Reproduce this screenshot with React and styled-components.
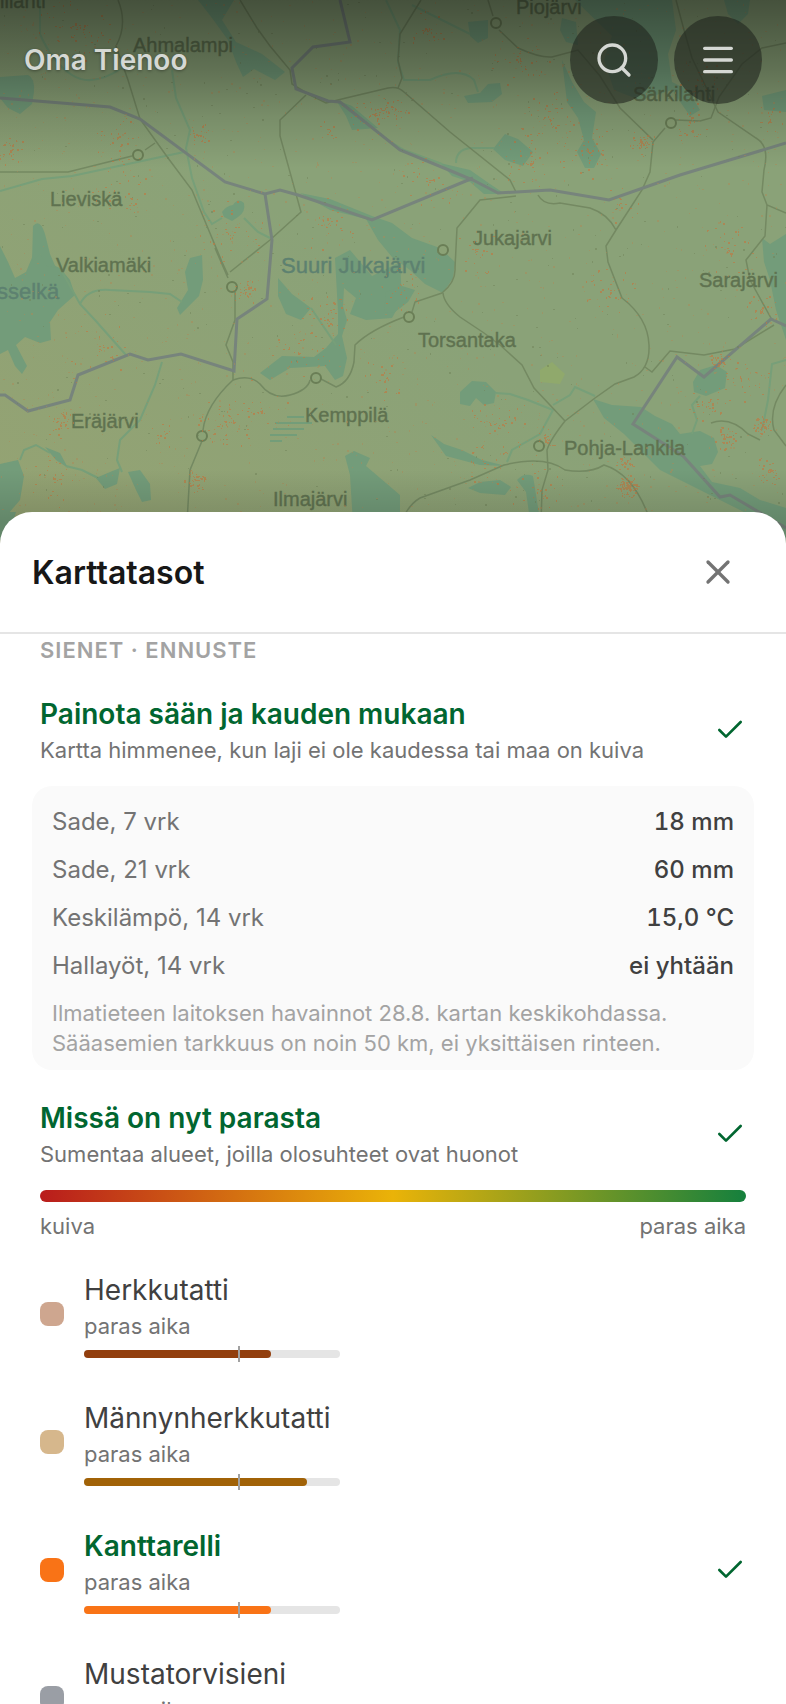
import React, { useState } from "react";
import styled, { createGlobalStyle } from "styled-components";
import { Check, Menu, Search, X } from "lucide-react";

const GlobalStyle = createGlobalStyle`
  *, *::before, *::after {
    box-sizing: border-box;
  }
  body {
    margin: 0;
    font-family: Inter, "Liberation Sans", sans-serif;
    background: #8ba276;
  }
  h1, h2, h3, p, dl, dd {
    margin: 0;
  }
  button {
    font: inherit;
    color: inherit;
    border: 0;
    padding: 0;
    background: none;
    cursor: pointer;
  }
`;

const lakes = [
  "M198 0H234L222 20 236 42 262 54 285 72 275 80 254 69 243 77 236 62 228 40 212 18Z",
  "M0 77L28 75Q35 78 34 92L32 104 20 114 8 108 0 98Z",
  "M222 212Q226 206 233 205 238 197 244 203 246 212 238 217L232 221 224 217Z",
  "M300 193L330 199 372 216 392 223 412 238 440 248 455 262 453 278 443 293 425 284 410 270 392 257 378 240 366 219 330 210Z",
  "M0 246L8 262 15 278 26 272 36 248 46 262 60 268 70 280 75 295 58 310 50 322 51 340 40 343 25 337 16 345 27 366 22 374 15 366 8 350 0 354Z",
  "M33 226Q40 218 45 234L50 254 56 268 47 266 40 254 32 262Z",
  "M190 258L202 255 203 280 199 296 180 315 177 308 188 290 185 272Z",
  "M278 278L292 294 311 308 301 320 286 314 278 296Z",
  "M335 258L350 250 372 276 400 262 402 300 392 318 366 320 350 314 356 298 344 288 343 306 347 320 342 336 347 358 343 376 335 380 325 366 308 367 290 368 270 380 260 373 282 356 314 357 326 348 338 334 338 312Z",
  "M386 292L402 286 415 290 408 302 395 312 384 313Z",
  "M460 392L472 381 486 382 496 392 494 403 484 405 476 398 470 406 460 404Z",
  "M431 435L444 444 462 450 482 460 506 466 480 465 446 456Z",
  "M593 399L612 405 641 407 655 416 672 424 680 434 700 431 714 438 718 452 712 464 700 466 712 482 740 488 760 500 786 508V540L760 520 730 505 700 490 660 470 642 452 624 434 604 418Z",
  "M693 382L700 370 716 365 727 372 725 388 706 396 694 392Z",
  "M468 488L480 482 500 480 511 487 505 495 480 493Z",
  "M517 480Q524 472 533 476L540 520H530L526 492Z",
  "M345 456L354 451 370 458 366 466 400 495V540H354L350 475Z",
  "M128 472L140 470 150 484 151 500 142 502 136 490Z",
  "M0 464L18 460 24 476 20 500 8 514 0 512Z",
  "M96 478L110 472 120 468 117 484 105 489Z",
  "M45 447L60 453 68 468 56 460Z",
  "M493 149L505 134 518 139 533 152 523 166 505 160Z",
  "M464 96L480 93 488 84 500 83 502 94 492 102 468 103Z",
  "M562 18L576 22 578 45 566 42 560 30Z",
  "M562 60L572 82 584 102 596 112 592 138 601 154 594 168 585 168 577 152 584 140 578 118 567 102Z",
  "M575 0H672L676 30 668 54 672 82 688 90 700 110 690 116 672 90 640 100 614 90 604 60 612 36Z",
  "M468 22L488 20 488 38 478 43 470 36Z",
  "M724 0H750L748 14 738 24 728 14Z",
  "M762 96L786 90V112L764 110Z",
  "M762 238L770 244 786 234V340L776 310 770 280 764 262Z",
  "M440 163L470 170 490 184 505 194 484 194 470 182 452 176Z",
  "M336 100L352 106 378 128 352 130 346 116Z",
  "M0 512H16L8 540H0Z",
];

const rivers = [
  "M40 0L40 34Q52 62 72 75T122 68",
  "M172 70L176 98 190 130 186 148 192 178 204 212 212 224 222 218",
  "M0 191L42 179 72 176 184 152",
  "M244 218L258 232 270 238",
  "M60 268L80 304 95 320 126 355",
  "M80 304Q88 288 110 290L150 292 170 294 182 302",
  "M162 362L155 385 140 420 120 440 117 460 122 472",
  "M20 460L24 450 36 445 50 453M66 466L82 470 98 478",
  "M496 393L510 394 528 400 553 410 540 434 512 450 507 462",
  "M553 405L570 395 575 387 595 396",
  "M700 396L692 405 697 420 692 434",
  "M386 0L400 30 398 62 404 80 430 80Q460 66 474 80L478 92",
  "M412 5L450 24 470 34",
  "M456 163Q456 150 470 148L494 148",
  "M311 308L336 345",
  "M786 360L772 364 768 400 762 430",
  "M386 139L404 150 442 164",
];

const roads = [
  "M118 0Q128 24 116 46L128 80 140 119 168 158 192 190 222 262 228 275",
  "M0 172L68 172 100 164 132 156M145 150L155 143",
  "M240 0L257 28 270 46 290 70 292 84 308 94 326 103 346 98 388 88Q398 86 404 92L450 132 510 180 516 192",
  "M421 0L400 34 398 60 402 78 398 88",
  "M306 95L280 120 280 136 301 212 270 240 230 272",
  "M215 248L228 278M235 292L235 320 226 345 233 362 233 380Q206 405 203 430M202 441L190 470 186 540",
  "M233 380Q250 374 260 384 272 400 290 395T310 380M321 379L336 387Q350 382 354 362L355 345Q370 330 404 317M412 312L415 302 442 293Q456 282 455 268L457 228 480 200 516 196",
  "M443 293Q444 304 460 317L484 333 500 345 522 365 534 388 565 421",
  "M400 524Q408 505 420 498L470 480 504 465Q545 455 565 470 590 474 604 465 634 474 650 520",
  "M541 524L542 490 548 470 547 450Q550 440 565 421L595 398 615 384 634 377Q650 368 649 345 648 318 622 298L608 262 606 246 616 230 642 190 650 172 653 142 665 128M676 120L700 121 711 118 719 97 742 64 762 48 786 43",
  "M645 367L652 372 670 351 704 355 735 349 774 325",
  "M488 0L493 16M499 30L518 48Q540 58 552 57L578 50 600 76 620 108 653 140",
  "M676 0L684 30 692 58 718 112 756 138Q770 146 764 170L762 192 767 205 786 213",
  "M767 205L765 236 746 260 750 280 772 320",
  "M538 195Q544 206 560 203L590 208Q608 214 616 230",
  "M711 423Q730 416 748 434L760 440M786 385Q768 408 774 430L786 446",
];

const borders = [
  "M0 98L110 107 140 119 225 182 265 194 280 190 298 195 372 220 473 178",
  "M340 0L350 42 313 47 292 68 296 89 328 101 340 102 400 150 444 168 473 180 498 193 550 190 609 200 680 175 786 143",
  "M265 194L272 240 267 299 237 319 234 371 181 354 148 360 130 354 78 375 70 400 28 411 5 395 0 395",
  "M786 326L771 319 704 377 677 357 633 424 683 456 720 497 730 495 786 528",
];

const towns = [
  [138, 155], [496, 23], [671, 123], [443, 250], [232, 287],
  [409, 317], [316, 378], [202, 436], [539, 446],
];

const places = [
  ["illahti", 0, 8], ["Ahmalampi", 133, 52], ["Piojärvi", 516, 14], ["Särkilahti", 633, 101],
  ["Lieviskä", 50, 206], ["Valkiamäki", 56, 272], ["Jukajärvi", 473, 245], ["Torsantaka", 418, 347],
  ["Sarajärvi", 699, 287], ["Kemppilä", 305, 422], ["Eräjärvi", 71, 428],
  ["Pohja-Lankila", 564, 455], ["Ilmajärvi", 273, 506],
];

const waters = [["Suuri Jukajärvi", 281, 273], ["sselkä", -3, 299]];

// x, y, spread, amount
const findSpots = [
  [75, 25, 40, 60], [10, 150, 15, 30], [115, 140, 30, 30], [200, 134, 12, 25], [120, 185, 30, 25],
  [230, 235, 35, 35], [375, 115, 25, 40], [130, 203, 10, 12], [330, 130, 14, 14], [245, 290, 14, 30],
  [60, 425, 15, 35], [225, 425, 30, 60], [195, 480, 12, 45], [55, 480, 28, 35], [160, 435, 14, 16],
  [330, 320, 30, 40], [330, 225, 30, 30], [385, 380, 26, 25], [400, 290, 22, 25], [427, 30, 20, 30],
  [550, 120, 30, 45], [585, 150, 30, 45], [642, 142, 14, 45], [690, 124, 20, 30], [520, 60, 30, 35],
  [395, 110, 14, 30], [530, 165, 30, 40], [430, 180, 30, 30], [475, 252, 25, 24], [610, 290, 26, 40],
  [500, 422, 32, 45], [627, 486, 12, 90], [625, 462, 10, 25], [724, 438, 12, 40], [762, 425, 10, 55],
  [718, 362, 10, 30], [760, 310, 18, 30], [710, 405, 22, 35], [545, 437, 12, 25], [485, 465, 24, 25],
  [700, 80, 25, 30], [728, 250, 30, 35], [770, 470, 16, 35], [740, 380, 30, 30], [540, 490, 40, 30],
  [300, 355, 28, 30], [100, 350, 40, 30], [260, 410, 35, 25], [620, 205, 20, 16], [770, 120, 16, 18],
];

// seeded, so the finds stay in place between renders
let seed = 17;
const random = () => {
  seed = (seed * 16807) % 2147483647;
  return seed / 2147483647;
};
const speck = (x, y) => {
  const width = random() > 0.6 ? 2 : 1;
  const height = random() > 0.7 ? 2 : 1;
  return `M${Math.round(x)} ${Math.round(y)}h${width}v${height}h-${width}z`;
};

const finds = findSpots
  .flatMap(([x, y, spread, amount]) =>
    Array.from({ length: amount }, () => {
      const angle = random() * Math.PI * 2;
      const distance = random() * spread;
      return speck(x + Math.cos(angle) * distance, y + Math.sin(angle) * distance);
    })
  )
  .join("");
const scatter = Array.from({ length: 1300 }, () => speck(random() * 786, random() * 520)).join("");
const rocks = Array.from({ length: 360 }, () => speck(random() * 786, random() * 520)).join("");

const MapSvg = styled.svg`
  position: absolute;
  top: 0;
  left: 0;
  width: 100%;
  height: 34vh;
  display: block;
  .lake {
    fill: #739c7a;
  }
  .river {
    fill: none;
    stroke: #779f79;
    stroke-width: 2;
  }
  .road {
    fill: none;
    stroke: #748962;
    stroke-width: 1.5;
  }
  .border {
    fill: none;
    stroke: #77847c;
    stroke-width: 3;
  }
  .town {
    fill: #8ba276;
    stroke: #6a7e56;
    stroke-width: 2;
  }
  .place,
  .water {
    font-family: "Liberation Sans", sans-serif;
    font-size: 20px;
    fill: #5f7250;
    stroke: #5f7250;
    stroke-width: 0.4px;
  }
  .water {
    font-size: 22px;
    fill: #5d8170;
    stroke: #5d8170;
  }
`;

const MapBackground = () => (
  <MapSvg viewBox="0 0 786 580" preserveAspectRatio="xMidYMin slice" aria-label="Kartta" role="img">
    <defs>
      <linearGradient id="land" x1="0" y1="1" x2="0.5" y2="0.5">
        <stop offset="0" stopColor="#96a372" />
        <stop offset="1" stopColor="#8aa278" />
      </linearGradient>
      <linearGradient id="shade" x1="0" y1="0" x2="0" y2="1">
        <stop offset="0" stopColor="#000" stopOpacity="0.5" />
        <stop offset="0.12" stopColor="#000" stopOpacity="0.3" />
        <stop offset="0.2" stopColor="#000" stopOpacity="0.13" />
        <stop offset="0.29" stopColor="#000" stopOpacity="0" />
        <stop offset="0.81" stopColor="#000" stopOpacity="0" />
        <stop offset="0.9" stopColor="#000" stopOpacity="0.14" />
      </linearGradient>
    </defs>
    <rect width="786" height="580" fill="url(#land)" />
    <path d="M552 362L565 374 560 384 540 382 540 370Z" fill="#90a96c" />
    {lakes.map((d) => (
      <path key={d} className="lake" d={d} />
    ))}
    {rivers.map((d) => (
      <path key={d} className="river" d={d} />
    ))}
    <path
      d="M287 417H304M275 423H312M273 429H304M270 435H297M270 441H282"
      stroke="#739d79"
      strokeWidth="2"
    />
    {roads.map((d) => (
      <path key={d} className="road" d={d} />
    ))}
    {borders.map((d) => (
      <path key={d} className="border" d={d} />
    ))}
    {towns.map(([x, y]) => (
      <circle key={x} className="town" cx={x} cy={y} r="5" />
    ))}
    {places.map(([name, x, y]) => (
      <text key={name} className="place" x={x} y={y}>
        {name}
      </text>
    ))}
    {waters.map(([name, x, y]) => (
      <text key={name} className="water" x={x} y={y}>
        {name}
      </text>
    ))}
    <path d={rocks} fill="#6f8257" opacity="0.5" />
    <path d={scatter} fill="#ab8a58" opacity="0.5" />
    <path d={finds} fill="#bf7a42" opacity="0.65" />
    <rect width="786" height="580" fill="url(#shade)" />
  </MapSvg>
);

const Screen = styled.div`
  position: relative;
  height: 100vh;
  display: flex;
  flex-direction: column;
  justify-content: space-between;
  overflow: hidden;
`;

const TopBar = styled.header`
  position: relative;
  display: flex;
  align-items: center;
  justify-content: space-between;
  padding: 16px 24px;
  color: #d5d8d4;
  h1 {
    font-size: 28px;
    font-weight: 600;
    text-shadow: 0 1px 3px rgba(0, 0, 0, 0.35);
  }
`;

const TopActions = styled.div`
  display: flex;
  gap: 16px;
`;

const RoundButton = styled.button`
  display: grid;
  place-items: center;
  width: 88px;
  height: 88px;
  border-radius: 50%;
  background: rgba(32, 36, 30, 0.6);
`;

const Sheet = styled.section`
  position: relative;
  display: flex;
  flex-direction: column;
  height: calc(70vh - 1px);
  background: #fff;
  border-radius: 32px 32px 0 0;
  overflow: hidden;
`;

const SheetHeader = styled.div`
  flex: none;
  display: flex;
  align-items: center;
  justify-content: space-between;
  height: 122px;
  padding: 0 32px;
  border-bottom: 2px solid #e5e5e5;
  h2 {
    font-size: 32px;
    font-weight: 600;
    color: #171717;
  }
`;

const CloseButton = styled.button`
  display: grid;
  place-items: center;
  width: 72px;
  height: 72px;
  color: #737373;
`;

const SheetBody = styled.div`
  flex: 1;
  overflow-y: auto;
  scrollbar-width: none;
  padding: 0 32px;
`;

const SectionTitle = styled.h3`
  padding: 0 8px;
  font-size: 22px;
  line-height: 32px;
  font-weight: 600;
  letter-spacing: 1px;
  text-transform: uppercase;
  color: #a3a3a3;
`;

const LayerButton = styled.button`
  display: flex;
  align-items: center;
  gap: 20px;
  width: 100%;
  padding: ${({ $roomy }) => ($roomy ? "20px 8px" : "28px 8px 20px")};
  text-align: left;
  .check {
    flex: none;
    color: #016630;
  }
`;

const LayerText = styled.span`
  flex: 1;
  display: flex;
  flex-direction: column;
`;

const LayerName = styled.span`
  font-size: 28px;
  line-height: 40px;
  font-weight: ${({ $active }) => ($active ? 600 : 400)};
  color: ${({ $active }) => ($active ? "#016630" : "#404040")};
`;

const LayerHint = styled.span`
  font-size: 22px;
  line-height: 32px;
  color: #737373;
`;

const Weather = styled.div`
  padding: 12px 20px;
  border-radius: 20px;
  background: #fafafa;
`;

const WeatherList = styled.dl`
  div {
    display: flex;
    justify-content: space-between;
    font-size: 24px;
    line-height: 48px;
  }
  dt {
    color: #737373;
  }
  dd {
    font-weight: 500;
    font-variant-numeric: tabular-nums;
    color: #404040;
  }
`;

const WeatherNote = styled.p`
  padding-top: 8px;
  font-size: 22px;
  line-height: 30px;
  color: #a3a3a3;
`;

const Scale = styled.div`
  padding: 0 8px 8px;
`;

const ScaleBar = styled.div`
  height: 12px;
  border-radius: 6px;
  background: linear-gradient(to right, #b91c1c, #eab308, #15803d);
`;

const ScaleLabels = styled.div`
  display: flex;
  justify-content: space-between;
  padding-top: 8px;
  font-size: 22px;
  line-height: 32px;
  color: #737373;
`;

const Swatch = styled.span`
  flex: none;
  width: 24px;
  height: 24px;
  border-radius: 8px;
  background: ${({ $color }) => $color};
`;

const Meter = styled.span`
  position: relative;
  width: 256px;
  height: 8px;
  margin-top: 8px;
  border-radius: 4px;
  background: #e5e5e5;
  &::after {
    content: "";
    position: absolute;
    left: 60%;
    top: -4px;
    width: 2px;
    height: 16px;
    background: #a1a1a1;
  }
`;

const MeterFill = styled.span`
  display: block;
  height: 100%;
  border-radius: 4px;
  background: ${({ $color }) => $color};
`;

const weather = [
  ["Sade, 7 vrk", "18 mm"],
  ["Sade, 21 vrk", "60 mm"],
  ["Keskilämpö, 14 vrk", "15,0 °C"],
  ["Hallayöt, 14 vrk", "ei yhtään"],
];

const species = [
  { name: "Herkkutatti", swatch: "#cea68f", color: "#923f0e", level: 73 },
  { name: "Männynherkkutatti", swatch: "#d6b78c", color: "#a16207", level: 87 },
  { name: "Kanttarelli", swatch: "#f97316", color: "#f97316", level: 73 },
  { name: "Mustatorvisieni", swatch: "#9a9ea5", color: "#374151", level: 70 },
];

const Layer = ({ name, hint, active, onClick, swatch, color, level }) => (
  <LayerButton type="button" aria-pressed={active} onClick={onClick} $roomy={Boolean(swatch)}>
    {swatch && <Swatch $color={swatch} />}
    <LayerText>
      <LayerName $active={active}>{name}</LayerName>
      <LayerHint>{hint}</LayerHint>
      {swatch && (
        <Meter>
          <MeterFill $color={color} style={{ width: `${level}%` }} />
        </Meter>
      )}
    </LayerText>
    {active && <Check className="check" size={32} />}
  </LayerButton>
);

const App = () => {
  const [active, setActive] = useState(["weighted", "best", "Kanttarelli"]);

  const toggle = (id) =>
    setActive((prev) => (prev.includes(id) ? prev.filter((item) => item !== id) : [...prev, id]));

  return (
    <Screen>
      <GlobalStyle />
      <MapBackground />
      <TopBar>
        <h1>Oma Tienoo</h1>
        <TopActions>
          <RoundButton type="button" aria-label="Haku">
            <Search size={40} />
          </RoundButton>
          <RoundButton type="button" aria-label="Valikko">
            <Menu size={40} />
          </RoundButton>
        </TopActions>
      </TopBar>
      <Sheet>
        <SheetHeader>
          <h2>Karttatasot</h2>
          <CloseButton type="button" aria-label="Sulje">
            <X size={40} />
          </CloseButton>
        </SheetHeader>
        <SheetBody>
          <SectionTitle>Sienet · ennuste</SectionTitle>
          <Layer
            name="Painota sään ja kauden mukaan"
            hint="Kartta himmenee, kun laji ei ole kaudessa tai maa on kuiva"
            active={active.includes("weighted")}
            onClick={() => toggle("weighted")}
          />
          <Weather>
            <WeatherList>
              {weather.map(([label, value]) => (
                <div key={label}>
                  <dt>{label}</dt>
                  <dd>{value}</dd>
                </div>
              ))}
            </WeatherList>
            <WeatherNote>
              Ilmatieteen laitoksen havainnot 28.8. kartan keskikohdassa. Sääasemien tarkkuus on noin
              50 km, ei yksittäisen rinteen.
            </WeatherNote>
          </Weather>
          <Layer
            name="Missä on nyt parasta"
            hint="Sumentaa alueet, joilla olosuhteet ovat huonot"
            active={active.includes("best")}
            onClick={() => toggle("best")}
          />
          <Scale>
            <ScaleBar />
            <ScaleLabels>
              <span>kuiva</span>
              <span>paras aika</span>
            </ScaleLabels>
          </Scale>
          {species.map((item) => (
            <Layer
              key={item.name}
              {...item}
              hint="paras aika"
              active={active.includes(item.name)}
              onClick={() => toggle(item.name)}
            />
          ))}
        </SheetBody>
      </Sheet>
    </Screen>
  );
};

export default App;
